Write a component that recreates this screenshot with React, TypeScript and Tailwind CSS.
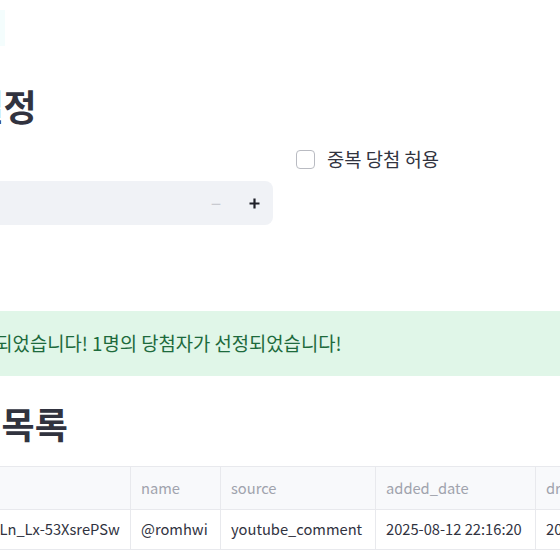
import React from "react";

export default function App() {
  const font = { fontFamily: '"Noto Sans CJK KR", "Noto Sans", sans-serif' };
  return (
    <div className="w-[560px] h-[560px] overflow-hidden bg-white text-[#31333f]" style={font}>
      <div className="h-[80px] pt-[10px]">
        <div className="h-[36px] w-[5px] bg-[#f4fdfd]" />
      </div>
      <div className="-ml-[87px] w-[1000px]">
        <h2 className="text-[36px] leading-[40px] font-bold h-[40px] mt-[5px] -ml-[17px] whitespace-nowrap">추첨 설정</h2>
        <div className="flex gap-[23px] mt-[24px]">
          <div className="w-[360px] flex flex-col">
            <div className="h-[32px] text-[15px] leading-[32px]">수</div>
            <div className="h-[44px] bg-[#f0f2f6] rounded-[8px] flex items-center">
              <div className="flex-1 pl-[16px] text-[17px]">1</div>
              <div className="w-[38px] h-full flex items-center justify-center text-[#c8cad0] text-[18px]">−</div>
              <div className="w-[38px] h-full flex items-center justify-center">
                <svg width="11" height="11" viewBox="0 0 11 11">
                  <path d="M5.5 0.5v10M0.5 5.5h10" stroke="#1f2029" strokeWidth="2.2" />
                </svg>
              </div>
            </div>
          </div>
          <div className="flex-1">
            <label className="flex items-center gap-[12px] h-[24px] -mt-[2px]">
              <span className="w-[19px] h-[19px] border border-[#b9bbc2] rounded-[4px] bg-white" />
              <span className="text-[18.8px] leading-[24px] text-[#31333f] whitespace-nowrap">중복 당첨 허용</span>
            </label>
          </div>
        </div>
        <div className="mt-[86px] h-[65px] bg-[#e0f6e8] rounded-[8px] flex items-center pl-[9px] text-[18.8px] text-[#1d6a3c] whitespace-nowrap">
          추첨 완료되었습니다! 1명의 당첨자가 선정되었습니다!
        </div>
        <h2 className="text-[36px] leading-[40px] font-bold h-[40px] mt-[27px] -ml-[19px] whitespace-nowrap">당첨자 목록</h2>
        <div className="mt-[23px] border-t border-b border-[#e8e9ed] text-[14.7px] whitespace-nowrap">
          <div className="flex h-[43px] bg-[#f8f9fb] text-[#a0a3ad] border-b border-[#e8e9ed]">
            <div className="w-[218px] border-r border-[#e8e9ed] pl-[18px] flex items-center">id</div>
            <div className="w-[90px] border-r border-[#e8e9ed] pl-[10px] flex items-center">name</div>
            <div className="w-[155px] border-r border-[#e8e9ed] pl-[10px] flex items-center">source</div>
            <div className="w-[160px] border-r border-[#e8e9ed] pl-[10px] flex items-center">added_date</div>
            <div className="w-[200px] pl-[10px] flex items-center">drawn_date</div>
          </div>
          <div className="flex h-[39px] text-[#31333f]">
            <div className="w-[218px] border-r border-[#e8e9ed] pl-[18px] flex items-center">UgzQ8v2eLn_Lx-53XsrePSw</div>
            <div className="w-[90px] border-r border-[#e8e9ed] pl-[10px] flex items-center">@romhwi</div>
            <div className="w-[155px] border-r border-[#e8e9ed] pl-[10px] flex items-center">youtube_comment</div>
            <div className="w-[160px] border-r border-[#e8e9ed] pl-[10px] flex items-center">2025-08-12 22:16:20</div>
            <div className="w-[200px] pl-[10px] flex items-center">2025-08-12 22:20:11</div>
          </div>
        </div>
      </div>
    </div>
  );
}
